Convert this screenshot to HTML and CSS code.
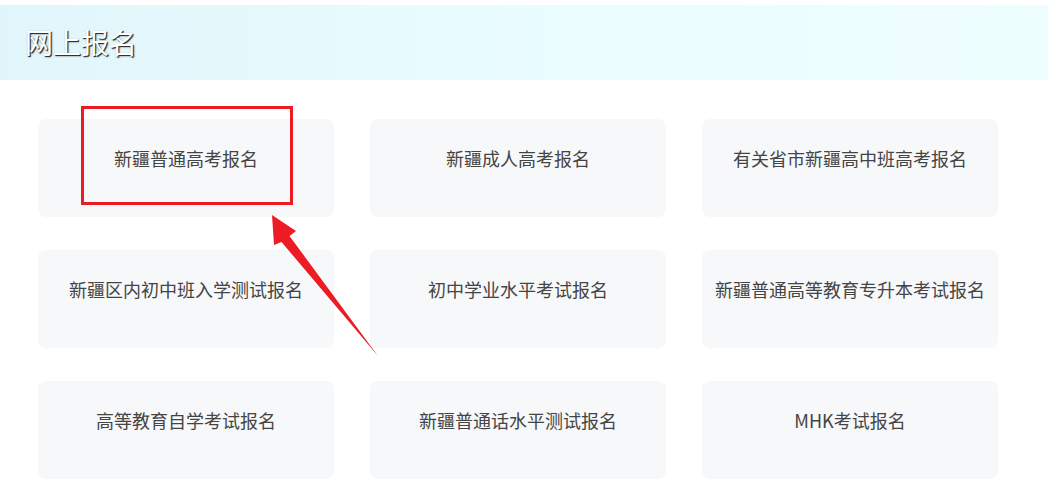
FILE: index.html
```html
<!DOCTYPE HTML>
<html>

<head>
  <meta charset="utf-8">
  <link rel="stylesheet" href="styles.css">
</head>

<body>
<div class="page">
  <div class="page-head">
    <h1 class="page-title">网上报名</h1>
  </div>

  <div class="sign-list">
    <a class="sign-item" href="#">新疆普通高考报名</a>
    <a class="sign-item" href="#">新疆成人高考报名</a>
    <a class="sign-item" href="#">有关省市新疆高中班高考报名</a>
    <a class="sign-item" href="#">新疆区内初中班入学测试报名</a>
    <a class="sign-item" href="#">初中学业水平考试报名</a>
    <a class="sign-item" href="#">新疆普通高等教育专升本考试报名</a>
    <a class="sign-item" href="#">高等教育自学考试报名</a>
    <a class="sign-item" href="#">新疆普通话水平测试报名</a>
    <a class="sign-item" href="#">MHK考试报名</a>
  </div>

  <!-- пометки поверх скриншота -->
  <div class="mark-box"></div>
  <svg class="mark-arrow" width="1048" height="503" viewBox="0 0 1048 503">
    <polygon points="272,215 274,245 281.5,242 378,356 289.5,236 296,231" fill="#ed1c24"/>
  </svg>
</div>
</body>

</html>
```

FILE: styles.css
```css
body {
  margin: 0;
  background: #fff;
  font-family: "Microsoft YaHei", "Noto Sans CJK SC", "Noto Sans", sans-serif;
}

.page {
  position: relative;
  height: 503px;
  overflow: hidden;
}

.page-head {
  margin-top: 5px;
  height: 75px;
  padding-left: 25px;
  display: flex;
  align-items: center;
  background: linear-gradient(to right, #e1f6fb, #ebfdff 60%, #eefeff);
}

.page-title {
  margin: 0 0 2px;
  font-size: 28px;
  font-weight: normal;
  line-height: 1;
  color: #fff;
  text-shadow: 1px 1px 0 #333, 1px 1px 2px #555;
}

.sign-list {
  display: grid;
  grid-template-columns: repeat(3, 296px);
  grid-auto-rows: 98px;
  column-gap: 36px;
  row-gap: 33px;
  margin-top: 39px;
  padding-left: 38px;
}

.sign-item {
  display: block;
  padding-top: 27px;
  background: #f7f8fa;
  border-radius: 8px;
  font-size: 18px;
  line-height: 24px;
  text-align: center;
  color: #444;
  text-decoration: none;
  white-space: nowrap;
}

.mark-box {
  position: absolute;
  left: 81px;
  top: 106px;
  width: 206px;
  height: 93px;
  border: 3px solid #ed1c24;
}

.mark-arrow {
  position: absolute;
  left: 0;
  top: 0;
  pointer-events: none;
}
```
